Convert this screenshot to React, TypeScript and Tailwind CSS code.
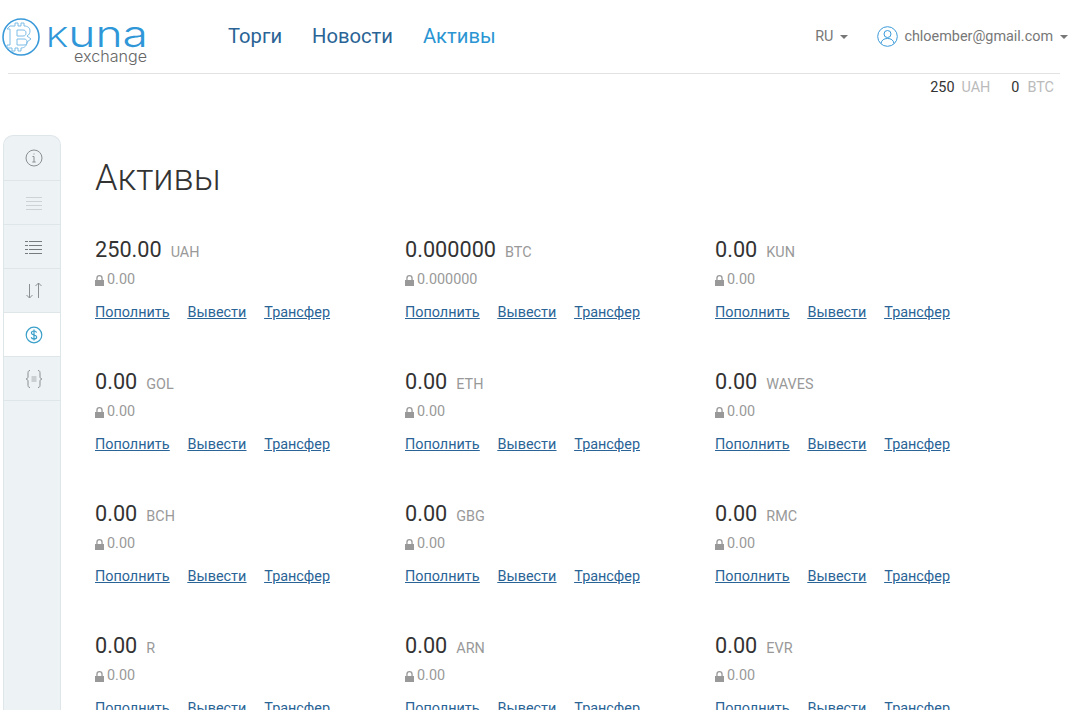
import { useState } from 'react'

const ASSETS = [
  { amount: '250.00', code: 'UAH', locked: '0.00' },
  { amount: '0.000000', code: 'BTC', locked: '0.000000' },
  { amount: '0.00', code: 'KUN', locked: '0.00' },
  { amount: '0.00', code: 'GOL', locked: '0.00' },
  { amount: '0.00', code: 'ETH', locked: '0.00' },
  { amount: '0.00', code: 'WAVES', locked: '0.00' },
  { amount: '0.00', code: 'BCH', locked: '0.00' },
  { amount: '0.00', code: 'GBG', locked: '0.00' },
  { amount: '0.00', code: 'RMC', locked: '0.00' },
  { amount: '0.00', code: 'R', locked: '0.00' },
  { amount: '0.00', code: 'ARN', locked: '0.00' },
  { amount: '0.00', code: 'EVR', locked: '0.00' },
]

function Caret() {
  return <span className="ml-[7px] inline-block h-0 w-0 border-x-[4px] border-t-[4px] border-x-transparent border-t-[#777]" />
}

function Logo() {
  return (
    <svg width="150" height="66" viewBox="0 0 150 66" className="shrink-0">
      <circle cx="21" cy="35" r="18" fill="none" stroke="#3a9ad9" strokeWidth="1.6" />
      {/* coin B: outer contour with the serifs, then the two inner counters */}
      <path
        d="M10 24h5v-3h3v3h3v-3h3v3c4 0 6 2 6 5 0 2-1 4-3 5l4 3-4 3c0 3-2 6-6 6v3h-3v-3h-3v3h-3v-3h-5v-3h3V27h-3z"
        fill="none"
        stroke="#7dbde6"
        strokeWidth="1"
      />
      <path d="M17 28h6c2 0 3 1 3 3s-1 3-3 3h-6zM17 37h7c2 0 3 1 3 3s-1 3-3 3h-7z" fill="none" stroke="#7dbde6" strokeWidth="1" />
      <text x="46" y="45" fontFamily="Inter, sans-serif" fontWeight="300" fill="#2f97d8" textLength="102" lengthAdjust="spacingAndGlyphs">
        <tspan fontSize="27.500">K</tspan>
        <tspan fontSize="37">una</tspan>
      </text>
      <text x="74" y="60" fontFamily="Inter, sans-serif" fontSize="15.500" fontWeight="300" fill="#666" textLength="73" lengthAdjust="spacingAndGlyphs">
        exchange
      </text>
    </svg>
  )
}

function SideIcon({ name }: { name: string }) {
  const c = name === 'assets' ? '#3a9fc9' : '#8a8f92'
  if (name === 'info') {
    return (
      <svg width="20" height="20" viewBox="0 0 20 20" fill="none" stroke={c}>
        <circle cx="10" cy="10" r="8" />
        <path d="M8.500 8.500h1.500v5.500M8.300 14h3.400M10 5.500v1" />
      </svg>
    )
  }
  if (name === 'lines') {
    return (
      <svg width="16" height="14" viewBox="0 0 16 14" stroke="#cdd2d5">
        <path d="M0 1.500h16M0 5.500h16M0 9.500h16M0 13.500h16" />
      </svg>
    )
  }
  if (name === 'list') {
    return (
      <svg width="17" height="14" viewBox="0 0 17 14" stroke="#767b7e">
        <path d="M0 1.500h3M4 1.500h13M0 5.500h3M4 5.500h13M0 9.500h3M4 9.500h13M0 13.500h3M4 13.500h13" />
      </svg>
    )
  }
  if (name === 'arrows') {
    return (
      <svg width="18" height="18" viewBox="0 0 18 18" fill="none" stroke={c}>
        <path d="M4.500 2v14M1.500 13l3 3 3-3M13.500 16V1M10.500 4l3-3 3 3" />
      </svg>
    )
  }
  if (name === 'assets') {
    return (
      <svg width="18" height="18" viewBox="0 0 18 18" fill="none" stroke={c} strokeWidth="1.200">
        <circle cx="9" cy="9" r="7.800" />
        <path d="M11.600 6.600C11.200 5.400 10.200 5 9 5 7.500 5 6.400 5.800 6.400 7c0 2.800 5.300 1.300 5.300 4 0 1.300-1.200 2-2.700 2-1.300 0-2.400-.6-2.800-1.800M9 3.500v11" />
      </svg>
    )
  }
  return (
    <svg width="18" height="20" viewBox="0 0 18 20" fill="none" stroke={c}>
      <path d="M5 1.500C3 1.500 3 3 3 5v3c0 1-1 2-2 2 1 0 2 1 2 2v3c0 2 0 3.500 2 3.500M13 1.500c2 0 2 1.500 2 3.500v3c0 1 1 2 2 2-1 0-2 1-2 2v3c0 2 0 3.500-2 3.500" />
      <path d="M6.500 8h5M6.500 10h5M6.500 12h5" strokeWidth=".7" />
    </svg>
  )
}

const SIDE_ITEMS = ['info', 'lines', 'list', 'arrows', 'assets', 'code']

function Sidebar() {
  const [active] = useState('assets')
  return (
    <aside className="ml-[3px] flex w-[58px] shrink-0 flex-col self-stretch rounded-t-[10px] border border-b-0 border-[#dfe6ea] bg-[#edf2f5]">
      {SIDE_ITEMS.map((name) => (
        <div
          key={name}
          className={`flex h-[44px] items-center justify-center border-b border-[#dfe6ea] pl-[3px] first:h-[45px] ${name === active ? 'bg-white' : ''}`}
        >
          <SideIcon name={name} />
        </div>
      ))}
    </aside>
  )
}

function AssetCard({ amount, code, locked }: { amount: string; code: string; locked: string }) {
  return (
    <div className="h-[132px]">
      <div className="flex h-[28px] items-baseline">
        <span className="text-[21.700px] leading-[28px] text-[#333]">{amount}</span>
        <span className="ml-[9px] text-[14.400px] text-[#999]">{code}</span>
      </div>
      <div className="mt-[6px] flex h-[20px] items-center text-[14.400px] text-[#999]">
        <svg width="9" height="11" viewBox="0 0 9 11" className="mr-[3px]" fill="#999">
          <path d="M1.300 5V3.200a3.200 3.200 0 0 1 6.400 0V5H9v6H0V5zm1.300 0h3.800V3.200a1.900 1.900 0 0 0-3.800 0z" />
        </svg>
        {locked}
      </div>
      <div className="mt-[13px] flex gap-[18px] text-[14.400px] leading-[20px] text-[#2a6496] underline">
        <a>Пополнить</a>
        <a>Вывести</a>
        <a>Трансфер</a>
      </div>
    </div>
  )
}

export default function App() {
  return (
    <div className="h-[710px] overflow-hidden bg-white font-['Roboto',sans-serif]">
      <header className="mx-[8px] flex h-[74px] items-start border-b border-[#e2e2e2]">
        <div className="-ml-[8px] pt-[2px]">
          <Logo />
        </div>
        <nav className="ml-[78px] flex gap-[30px] pt-[23px] text-[20.200px] leading-[26px] text-[#2a6496]">
          <a>Торги</a>
          <a>Новости</a>
          <a className="text-[#2b95d3]">Активы</a>
        </nav>
        <div className="ml-auto flex items-center pt-[26px] text-[14.400px] leading-[20px] text-[#777]">
          <span className="flex items-center">
            RU
            <Caret />
          </span>
          <svg width="21" height="21" viewBox="0 0 21 21" fill="none" stroke="#3a9ad9" className="ml-[29px] mr-[6px]">
            <circle cx="10.500" cy="10.500" r="9.800" />
            <circle cx="10.500" cy="8" r="3.500" />
            <path d="M4 17.500c.5-3.500 3-5 6.500-5s6 1.500 6.500 5" />
          </svg>
          <span>chloember@gmail.com</span>
          <span className="-mr-[8px] flex items-center">
            <Caret />
          </span>
        </div>
      </header>

      <div className="mr-[14px] flex h-[28px] items-center justify-end text-[14.400px] text-[#333]">
        <span>250</span>
        <span className="ml-[7px] text-[#bbb]">UAH</span>
        <span className="ml-[21px]">0</span>
        <span className="ml-[8px] text-[#bbb]">BTC</span>
      </div>

      <main className="mt-[33px] flex h-[600px] items-start">
        <Sidebar />
        <div className="ml-[34px] min-w-0 flex-1">
          <h1 className="mt-[20px] text-[36px] font-light leading-[46px] text-[#333]">Активы</h1>
          <div className="mt-[35px] grid grid-cols-[310px_310px_310px]">
            {ASSETS.map((a) => (
              <AssetCard key={a.code} {...a} />
            ))}
          </div>
        </div>
      </main>
    </div>
  )
}
